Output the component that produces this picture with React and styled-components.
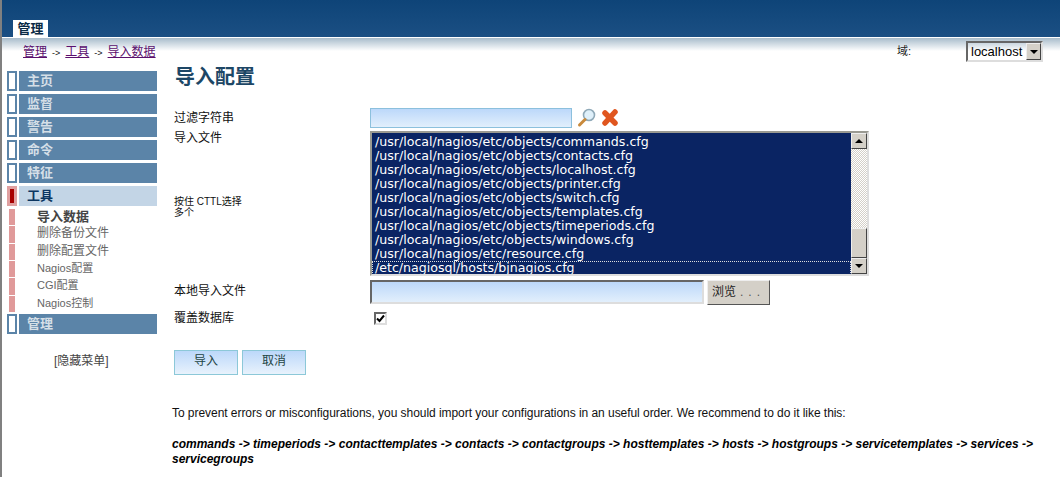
import styled, { createGlobalStyle } from 'styled-components';

const cjk = '"Noto Sans CJK SC", sans-serif';

const menuTop = ['主页', '监督', '警告', '命令', '特征'];
const subItems = ['导入数据', '删除备份文件', '删除配置文件', 'Nagios配置', 'CGI配置', 'Nagios控制'];
const files = [
  '/usr/local/nagios/etc/objects/commands.cfg',
  '/usr/local/nagios/etc/objects/contacts.cfg',
  '/usr/local/nagios/etc/objects/localhost.cfg',
  '/usr/local/nagios/etc/objects/printer.cfg',
  '/usr/local/nagios/etc/objects/switch.cfg',
  '/usr/local/nagios/etc/objects/templates.cfg',
  '/usr/local/nagios/etc/objects/timeperiods.cfg',
  '/usr/local/nagios/etc/objects/windows.cfg',
  '/usr/local/nagios/etc/resource.cfg',
  '/etc/nagiosql/hosts/bjnagios.cfg',
];

function MenuRow({ label, active }) {
  return (
    <Row>
      <Marker $active={active} />
      <RowLabel $active={active}>{label}</RowLabel>
    </Row>
  );
}

export default function App() {
  return (
    <Page>
      <GlobalStyle />
      <Header>
        <Tab>管理</Tab>
      </Header>
      <Crumbs>
        <CrumbPath>
          <a href="#a">管理</a>
          <Arrow>-&gt;</Arrow>
          <a href="#b">工具</a>
          <Arrow>-&gt;</Arrow>
          <a href="#c">导入数据</a>
        </CrumbPath>
        <Domain>
          <DomainLabel>域:</DomainLabel>
          <FakeSelect>
            <span>localhost</span>
            <SelectArrow><Tri $down /></SelectArrow>
          </FakeSelect>
        </Domain>
      </Crumbs>
      <Body>
        <Sidebar>
          {menuTop.map((m) => <MenuRow key={m} label={m} />)}
          <MenuRow label="工具" active />
          <SubList>
            {subItems.map((s, i) => (
              <SubRow key={s}>
                <SubMark />
                <SubLabel $bold={i === 0} $latin={i > 2}>{s}</SubLabel>
              </SubRow>
            ))}
          </SubList>
          <MenuRow label="管理" />
          <HideMenu>[隐藏菜单]</HideMenu>
        </Sidebar>
        <Main>
          <Title>导入配置</Title>
          <Form>
            <Label>过滤字符串</Label>
            <FilterCell>
              <BlueInput />
              <svg width="20" height="20" viewBox="0 0 20 20">
                <circle cx="12" cy="7" r="5.5" fill="#dff0fa" stroke="#8fa9b8" strokeWidth="1.6" />
                <path d="M8 11.5 L2.5 17" stroke="#c98a3c" strokeWidth="3" strokeLinecap="round" />
              </svg>
              <svg width="18" height="18" viewBox="0 0 18 18">
                <path d="M4 4 L14 14 M14 3 L4 14" stroke="#e0561f" strokeWidth="5.5" strokeLinecap="round" />
              </svg>
            </FilterCell>
            <FileLabels>
              <Label>导入文件</Label>
              <Hint>按住 CTTL选择<br />多个</Hint>
            </FileLabels>
            <ListBox>
              <Options>
                {files.map((f, i) => <Option key={f} $focus={i === files.length - 1}>{f}</Option>)}
              </Options>
              <ScrollBar>
                <ScrollBtn><Tri /></ScrollBtn>
                <Track />
                <Thumb />
                <ScrollBtn><Tri $down /></ScrollBtn>
              </ScrollBar>
            </ListBox>
            <Label $low>本地导入文件</Label>
            <LocalCell>
              <LocalInput />
              <Browse>浏览<Dots>...</Dots></Browse>
            </LocalCell>
            <Label>覆盖数据库</Label>
            <CheckCell>
              <Check>
                <svg width="9" height="9" viewBox="0 0 9 9">
                  <path d="M1 4.5 L3.5 7 L8 1.5" fill="none" stroke="#000" strokeWidth="2" />
                </svg>
              </Check>
            </CheckCell>
          </Form>
          <Buttons>
            <Btn>导入</Btn>
            <Btn>取消</Btn>
          </Buttons>
          <Note>To prevent errors or misconfigurations, you should import your configurations in an useful order. We recommend to do it like this:</Note>
          <Order>commands -&gt; timeperiods -&gt; contacttemplates -&gt; contacts -&gt; contactgroups -&gt; hosttemplates -&gt; hosts -&gt; hostgroups -&gt; servicetemplates -&gt; services -&gt; servicegroups</Order>
        </Main>
      </Body>
    </Page>
  );
}

const GlobalStyle = createGlobalStyle`
  html, body {
    margin: 0;
    padding: 0;
    background: #fff;
    overflow: hidden;
  }
`;
const Page = styled.div`
  width: 1058px;
  height: 477px;
  border-left: 2px solid #808080;
  font-family: "Liberation Sans", ${cjk};
  overflow: hidden;
`;
const Header = styled.div`
  height: 37px;
  box-sizing: border-box;
  padding: 20px 0 0 11px;
  background: linear-gradient(#0e4478, #1b4f83);
`;
const Tab = styled.div`
  width: 35px;
  height: 17px;
  background: #fff;
  color: #0a2a45;
  font-size: 13px;
  font-weight: 700;
  line-height: 18px;
  text-align: center;
`;
const Crumbs = styled.div`
  height: 33px;
  margin-top: 1px;
  box-sizing: border-box;
  display: flex;
  justify-content: space-between;
  padding: 3px 17px 0 21px;
  background: linear-gradient(#a8bccb, #fff 13px);
`;
const CrumbPath = styled.div`
  font-size: 12px;
  line-height: 22px;
  a {
    color: #5b0f6d;
  }
`;
const Arrow = styled.span`
  margin: 0 5px;
  font-size: 9px;
  color: #111;
`;
const Domain = styled.div`
  display: flex;
  align-items: flex-start;
`;
const DomainLabel = styled.span`
  width: 69px;
  font-size: 11px;
  line-height: 20px;
  color: #222;
`;
const FakeSelect = styled.div`
  width: 77px;
  height: 21px;
  box-sizing: border-box;
  display: flex;
  align-items: center;
  justify-content: space-between;
  padding-left: 3px;
  border: 2px solid;
  border-color: #666 #ddd #ddd #666;
  font-size: 13px;
  color: #000;
`;
const SelectArrow = styled.div`
  width: 15px;
  height: 17px;
  display: flex;
  align-items: center;
  justify-content: center;
  background: #d4d0c8;
  border: 1px solid;
  box-sizing: border-box;
  border-color: #eee #444 #444 #eee;
`;
const Tri = styled.i`
  width: 0;
  height: 0;
  border-left: 4px solid transparent;
  border-right: 4px solid transparent;
  border-bottom: ${(p) => (p.$down ? '0' : '4px solid #000')};
  border-top: ${(p) => (p.$down ? '4px solid #000' : '0')};
`;
const Body = styled.div`
  display: flex;
`;
const Sidebar = styled.div`
  width: 155px;
  padding-left: 5px;
  box-sizing: border-box;
`;
const Row = styled.div`
  display: flex;
  gap: 2px;
  height: 20px;
  margin-bottom: 3px;
`;
const Marker = styled.div`
  width: 10px;
  box-sizing: border-box;
  border: ${(p) => (p.$active ? '3px solid #e0a0a0' : '2px solid #5b84a8')};
  background: ${(p) => (p.$active ? '#a80000' : '#fff')};
`;
const RowLabel = styled.div`
  flex: 1;
  padding-left: 8px;
  background: ${(p) => (p.$active ? '#c3d5e6' : '#5b84a8')};
  color: ${(p) => (p.$active ? '#0b3560' : '#d5dfe7')};
  font-size: 13px;
  font-weight: 700;
  line-height: 20px;
`;
const SubList = styled.div`
  display: flex;
  flex-direction: column;
  margin-bottom: 1px;
`;
const SubRow = styled.div`
  display: flex;
  height: 17.33px;
`;
const SubMark = styled.div`
  width: 6px;
  margin: 0 0 1px 2px;
  background: #e09a9a;
`;
const SubLabel = styled.div`
  padding-left: 22px;
  font-size: ${(p) => (p.$bold ? '13px' : p.$latin ? '11px' : '12px')};
  font-weight: ${(p) => (p.$bold ? 700 : 400)};
  color: ${(p) => (p.$bold ? '#444' : '#666')};
  line-height: 15px;
`;
const HideMenu = styled.div`
  margin-top: 19px;
  padding-left: 47px;
  font-size: 12px;
  line-height: 16px;
  color: #444;
`;
const Main = styled.div`
  flex: 1;
  margin-top: -7px;
  padding: 0 25px 0 15px;
  min-width: 0;
`;
const Title = styled.h1`
  margin: 0 0 15px 3px;
  height: 29px;
  font-size: 20px;
  line-height: 26px;
  font-weight: 700;
  color: #1d4766;
`;
const Form = styled.div`
  display: grid;
  grid-template-columns: 196px 1fr;
  grid-template-rows: 20px 146px 25px 26px;
  row-gap: 3px;
  margin-left: 2px;
`;
const Label = styled.div`
  padding-top: ${(p) => (p.$low ? '2px' : '1px')};
  font-size: 12px;
  line-height: 18px;
  color: #111;
`;
const FilterCell = styled.div`
  display: flex;
  align-items: center;
  gap: 4px;
`;
const BlueInput = styled.div`
  width: 202px;
  height: 20px;
  box-sizing: border-box;
  border: 1px solid #8cc0dd;
  background: linear-gradient(#bcd8fa, #e2effc);
  margin-right: 1px;
`;
const FileLabels = styled.div`
  display: flex;
  flex-direction: column;
  margin-top: -3px;
`;
const Hint = styled.div`
  margin-top: 49px;
  font-size: 10px;
  line-height: 11px;
  color: #111;
`;
const ListBox = styled.div`
  width: 499px;
  height: 145px;
  box-sizing: border-box;
  display: flex;
  border: 2px solid;
  border-color: #9a9a92 #ddd #ddd #9a9a92;
`;
const Options = styled.div`
  flex: 1;
  background: #0a2463;
  overflow: hidden;
  padding-top: 2px;
`;
const Option = styled.div`
  height: 14px;
  box-sizing: border-box;
  padding-left: 3px;
  font-family: "DejaVu Sans", sans-serif;
  font-size: 12.6px;
  line-height: 14px;
  color: #fff;
  white-space: nowrap;
  outline: ${(p) => (p.$focus ? '1px dotted #ddd' : 'none')};
  outline-offset: -1px;
`;
const ScrollBar = styled.div`
  width: 16px;
  display: flex;
  flex-direction: column;
`;
const ScrollBtn = styled.div`
  height: 16px;
  box-sizing: border-box;
  display: flex;
  align-items: center;
  justify-content: center;
  background: #d4d0c8;
  border: 1px solid;
  border-color: #eee #444 #444 #eee;
`;
const Track = styled.div`
  flex: 1;
  background: repeating-conic-gradient(#d4d0c8 0 25%, #fff 0 50%) 0 0 / 2px 2px;
`;
const Thumb = styled.div`
  height: 30px;
  box-sizing: border-box;
  background: #d4d0c8;
  border: 1px solid;
  border-color: #eee #444 #444 #eee;
`;
const LocalCell = styled.div`
  display: flex;
  gap: 3px;
`;
const LocalInput = styled.div`
  width: 334px;
  height: 24px;
  box-sizing: border-box;
  border: 2px solid;
  border-color: #666 #ddd #ddd #666;
  background: linear-gradient(#bcd8fa, #e2effc);
`;
const Browse = styled.div`
  width: 63px;
  height: 25px;
  box-sizing: border-box;
  background: #d4d0c8;
  border: 1px solid;
  border-color: #eee #555 #555 #eee;
  font-size: 12px;
  line-height: 22px;
  text-align: center;
  color: #222;
`;
const Dots = styled.span`
  margin-left: 4px;
  letter-spacing: 5px;
  color: #555;
`;
const CheckCell = styled.div`
  padding: 4px 0 0 4px;
`;
const Check = styled.div`
  width: 13px;
  height: 13px;
  box-sizing: border-box;
  display: flex;
  align-items: center;
  justify-content: center;
  border: 2px solid;
  border-color: #666 #ddd #ddd #666;
  background: #fff;
`;
const Buttons = styled.div`
  display: flex;
  gap: 4px;
  margin: 16px 0 0 2px;
`;
const Btn = styled.div`
  width: 64px;
  height: 25px;
  box-sizing: border-box;
  border: 1px solid #8cc8d8;
  background: linear-gradient(#bcd8fa, #e8f2fc);
  font-size: 12px;
  line-height: 21px;
  text-align: center;
  color: #244;
`;
const Note = styled.p`
  margin: 31px 0 0;
  font-size: 12px;
  line-height: 14px;
  letter-spacing: -0.05px;
  color: #111;
`;
const Order = styled.p`
  margin: 17px 0 0;
  font-size: 12px;
  line-height: 15px;
  font-weight: 700;
  font-style: italic;
  color: #000;
`;
